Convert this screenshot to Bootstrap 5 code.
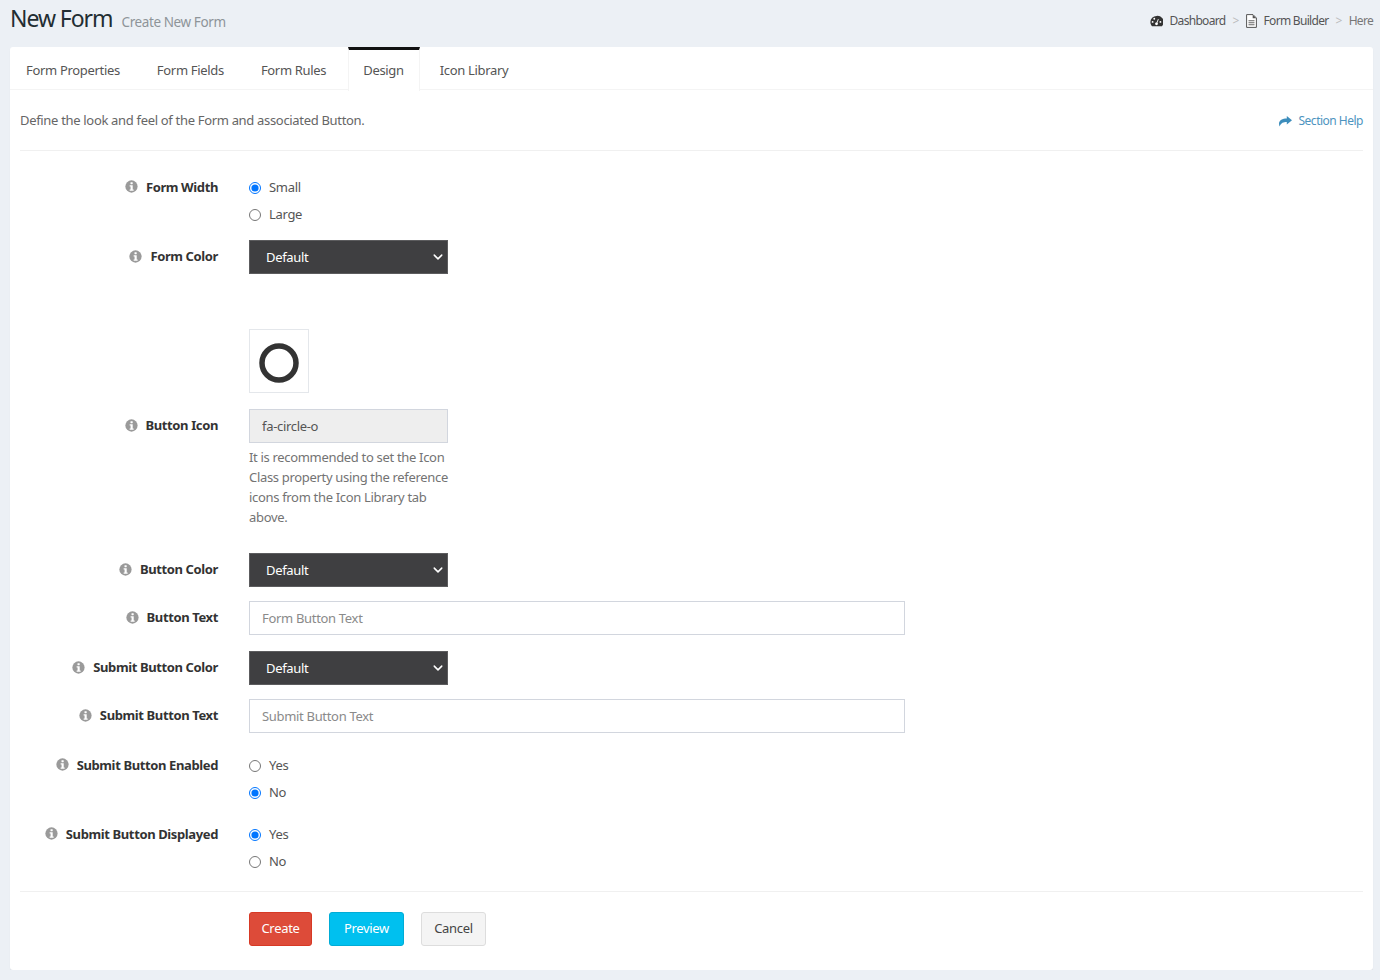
<!DOCTYPE html>
<html lang="en">
<head>
<meta charset="UTF-8" />
<meta name="viewport" content="width=device-width, initial-scale=1.0" />
<title>New Form</title>
<link href="https://cdn.jsdelivr.net/npm/bootstrap@5.3.0/dist/css/bootstrap.min.css" rel="stylesheet" />
<style>
  body { background: #ecf0f5; font-family: "Noto Sans", sans-serif; font-size: 13px; color: #333; letter-spacing: -.32px; }
  .page-head { height: 47px; padding: 0 7px 0 10px; }
  .head-left { padding-bottom: 9px; }
  .page-head h1 { font-size: 23px; font-weight: 400; margin: 0; color: #222d32; letter-spacing: -1.05px; }
  .page-head .sub { font-size: 13.5px; color: #8e9499; margin-left: 9px; letter-spacing: -.4px; }
  .crumbs { font-size: 12px; color: #555; letter-spacing: -.7px; padding-bottom: 6px; }
  .crumbs .sep { color: #bbb; margin: 0 7px; }
  .crumbs .here { color: #777; }
  .crumbs svg { margin-right: 7px; }
  .form-box { margin: 0 7px 0 10px; background: #fff; border-radius: 3px; height: 923px; box-shadow: 0 1px 1px rgba(0,0,0,.08); }
  .tab-bar { height: 43px; border-bottom: 1px solid #f4f4f4; }
  .tab-bar .nav-item { margin-right: 5px; }
  .tab-bar .on-tab { margin-left: 1px; margin-right: 4px; }
  .tab-bar .nav-link { color: #555; padding: 0 16px; height: 43px; line-height: 47px; border: 0; font-size: 13px; border-radius: 0; }
  .tab-bar .nav-link.active { border-top: 3px solid #111; border-left: 1px solid #f4f4f4; border-right: 1px solid #f4f4f4; height: 44px; line-height: 41px; color: #555; background: #fff; padding: 0 15px 0 14px; }
  .box-body { padding: 0 10px; }
  .intro { height: 61px; padding-top: 2px; border-bottom: 1px solid #f0f0f0; color: #666; margin-bottom: 23px; }
  .help-link { font-size: 12px; color: #4d94c0; text-decoration: none; letter-spacing: -.5px; }
  .help-link svg { margin-right: 7px; }
  .lbl { flex: 0 0 198px; text-align: right; font-weight: 700; color: #333; font-size: 13px; letter-spacing: -.38px; display: flex; justify-content: flex-end; align-items: center; gap: 8px; margin: 0; }
  .info { flex: none; margin-bottom: 2px; }
  .fld { margin-left: 31px; width: 199px; }
  .fld.wide { width: 656px; }
  .radio-line { height: 27px; display: flex; align-items: center; gap: 8px; margin: 0; padding: 0; color: #555; }
  .radio-line input { margin: 0; width: 12px; height: 12px; flex: none; }
  .radio-lbl { align-self: flex-start; height: 27px; }
  .dark-sel.form-select { height: 34px; border-radius: 0; background-color: #3f3f41; color: #fff; border: 1px solid #5c5c5e; font-size: 13px; padding: 2px 16px 0; letter-spacing: -.32px; background-image: url("data:image/svg+xml,%3csvg xmlns='http://www.w3.org/2000/svg' viewBox='0 0 16 16'%3e%3cpath fill='none' stroke='%23fff' stroke-linecap='round' stroke-linejoin='round' stroke-width='2.4' d='m2 5 6 6 6-6'/%3e%3c/svg%3e"); background-position: right 4px center; background-size: 10px 10px; }
  .plain-in.form-control { height: 34px; border-radius: 0; border: 1px solid #d2d6de; font-size: 13px; color: #555; padding: 0 12px; letter-spacing: -.32px; }
  .plain-in.form-control::placeholder { color: #8a8a8a; }
  .plain-in.form-control:disabled { background: #eee; }
  .icon-box { width: 60px; height: 64px; border: 1px solid #e4e7eb; display: flex; align-items: center; justify-content: center; }
  .hint { color: #737373; line-height: 20px; margin: 4px 0 0; }
  .rw { display: flex; align-items: center; }
  .sp-12 { margin-top: 12px; }
  .sp-14 { margin-top: 14px; }
  .sp-15 { margin-top: 15px; }
  .sp-16 { margin-top: 16px; }
  .sp-19 { margin-top: 19px; }
  .sp-26 { margin-top: 26px; }
  .sp-55 { margin-top: 55px; }
  .foot { border-top: 1px solid #f0f0f0; padding: 20px 0 0 229px; margin-top: 16px; gap: 17px; }
  .foot .btn { height: 34px; font-size: 13px; border-radius: 3px; padding: 0; letter-spacing: -.32px; }
  .foot .b-create { background: #dd4b39; border: 1px solid #d73925; color: #fff; width: 63px; }
  .foot .b-preview { background: #00c0ef; border: 1px solid #00acd6; color: #fff; width: 75px; }
  .foot .b-cancel { background: #f4f4f4; border: 1px solid #ddd; color: #444; width: 65px; }
</style>
</head>
<body>
<svg width="0" height="0" class="position-absolute">
  <symbol id="i-info" viewBox="0 0 14 14"><circle cx="7" cy="7" r="6.6" fill="#9a9a9a"/><rect x="5.900" y="2.300" width="2.400" height="2.200" rx=".4" fill="#fff"/><path d="M5 5.600h3.300v4.500h1v1.500H5v-1.500h1V7.100H5z" fill="#fff"/></symbol>
</svg>

<div class="page-head d-flex align-items-center justify-content-between">
  <div class="head-left d-flex align-items-baseline"><h1>New Form</h1><span class="sub">Create New Form</span></div>
  <div class="crumbs d-flex align-items-center">
    <svg width="13" height="12" viewBox="0 0 14 12"><path d="M7 .5A6.600 6.600 0 0 0 .4 7.100c0 1.600.5 3 1.500 4.200l.3.3h10.600l.3-.3a6.600 6.600 0 0 0 .0-8.400A6.600 6.600 0 0 0 7 .5z" fill="#333"/><circle cx="7" cy="9" r="1.500" fill="#fff"/><path d="M7 9l2-5" stroke="#fff" stroke-width="1"/><circle cx="2.800" cy="7" r="1" fill="#fff"/><circle cx="4.600" cy="3.600" r="1" fill="#fff"/><circle cx="11.200" cy="7" r="1" fill="#fff"/></svg>
    <span>Dashboard</span><span class="sep">&gt;</span>
    <svg width="11" height="14" viewBox="0 0 11 14"><path d="M.6.600h6.400l3.400 3.400v9.400H.6z" fill="#fff" stroke="#555"/><path d="M6.700.8v3.500h3.500z" fill="#555"/><path d="M2.500 6.200h6v1.100h-6zm0 2h6v1.100h-6zm0 2h6v1.100h-6z" fill="#666"/></svg>
    <span>Form Builder</span><span class="sep">&gt;</span><span class="here">Here</span>
  </div>
</div>

<div class="form-box">
  <ul class="nav tab-bar">
    <li class="nav-item"><a class="nav-link" href="#">Form Properties</a></li>
    <li class="nav-item"><a class="nav-link" href="#">Form Fields</a></li>
    <li class="nav-item"><a class="nav-link" href="#">Form Rules</a></li>
    <li class="nav-item on-tab"><a class="nav-link active" href="#">Design</a></li>
    <li class="nav-item"><a class="nav-link" href="#">Icon Library</a></li>
  </ul>
  <div class="box-body">
    <div class="intro d-flex align-items-center justify-content-between">
      <span>Define the look and feel of the Form and associated Button.</span>
      <a class="help-link d-flex align-items-center" href="#"><svg width="13" height="11" viewBox="0 0 13 11"><path d="M7.800 0L13 4.200 7.800 8.400V6C4.500 6 2 6.800.6 10.600.2 9.600 0 8.500 0 7.600 0 4.300 3.500 2.600 7.800 2.500z" fill="#3c8dbc"/></svg>Section Help</a>
    </div>

    <div class="rw">
      <label class="lbl radio-lbl"><svg class="info" width="13" height="13"><use href="#i-info"/></svg>Form Width</label>
      <div class="fld">
        <label class="radio-line"><input type="radio" name="w" checked>Small</label>
        <label class="radio-line"><input type="radio" name="w">Large</label>
      </div>
    </div>
    <div class="rw sp-12">
      <label class="lbl"><svg class="info" width="13" height="13"><use href="#i-info"/></svg>Form Color</label>
      <div class="fld"><select class="form-select dark-sel"><option>Default</option></select></div>
    </div>
    <div class="rw sp-55">
      <div class="lbl"></div>
      <div class="fld"><div class="icon-box"><svg width="42" height="46" viewBox="0 0 42 46"><circle cx="21" cy="25" r="17" fill="none" stroke="#333" stroke-width="5.500"/></svg></div></div>
    </div>
    <div class="rw sp-16">
      <label class="lbl"><svg class="info" width="13" height="13"><use href="#i-info"/></svg>Button Icon</label>
      <div class="fld"><input class="form-control plain-in" disabled value="fa-circle-o"></div>
    </div>
    <div class="rw">
      <div class="lbl"></div>
      <div class="fld"><p class="hint">It is recommended to set the Icon Class property using the reference icons from the Icon Library tab above.</p></div>
    </div>
    <div class="rw sp-26">
      <label class="lbl"><svg class="info" width="13" height="13"><use href="#i-info"/></svg>Button Color</label>
      <div class="fld"><select class="form-select dark-sel"><option>Default</option></select></div>
    </div>
    <div class="rw sp-14">
      <label class="lbl"><svg class="info" width="13" height="13"><use href="#i-info"/></svg>Button Text</label>
      <div class="fld wide"><input class="form-control plain-in" placeholder="Form Button Text"></div>
    </div>
    <div class="rw sp-16">
      <label class="lbl"><svg class="info" width="13" height="13"><use href="#i-info"/></svg>Submit Button Color</label>
      <div class="fld"><select class="form-select dark-sel"><option>Default</option></select></div>
    </div>
    <div class="rw sp-14">
      <label class="lbl"><svg class="info" width="13" height="13"><use href="#i-info"/></svg>Submit Button Text</label>
      <div class="fld wide"><input class="form-control plain-in" placeholder="Submit Button Text"></div>
    </div>
    <div class="rw sp-19">
      <label class="lbl radio-lbl"><svg class="info" width="13" height="13"><use href="#i-info"/></svg>Submit Button Enabled</label>
      <div class="fld"><label class="radio-line"><input type="radio" name="e">Yes</label>
        <label class="radio-line"><input type="radio" name="e" checked>No</label></div>
    </div>
    <div class="rw sp-15">
      <label class="lbl radio-lbl"><svg class="info" width="13" height="13"><use href="#i-info"/></svg>Submit Button Displayed</label>
      <div class="fld"><label class="radio-line"><input type="radio" name="d" checked>Yes</label>
        <label class="radio-line"><input type="radio" name="d">No</label></div>
    </div>
    <div class="foot d-flex">
      <button class="btn b-create">Create</button>
      <button class="btn b-preview">Preview</button>
      <button class="btn b-cancel">Cancel</button>
    </div>
  </div>
</div>
<script src="https://cdn.jsdelivr.net/npm/bootstrap@5.3.0/dist/js/bootstrap.bundle.min.js"></script>
</body>
</html>
